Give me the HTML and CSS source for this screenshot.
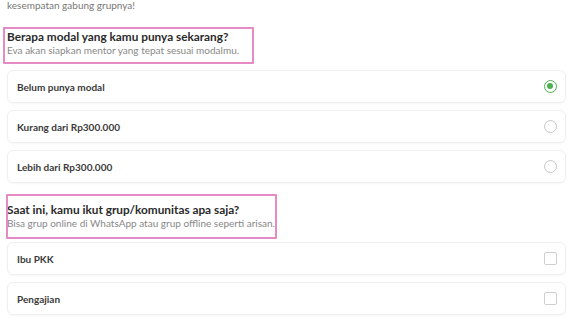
FILE: index.html
```html
<!DOCTYPE html>
<html lang="id">
<head>
    <meta charset="UTF-8">
    <meta name="viewport" content="width=device-width, initial-scale=1.0">
    <title>Kuesioner</title>
    <link rel="stylesheet" href="styles.css">
</head>
<body>
    <p class="intro">kesempatan gabung grupnya!</p>

    <div class="question question-first">
        <h3>Berapa modal yang kamu punya sekarang?</h3>
        <p>Eva akan siapkan mentor yang tepat sesuai modalmu.</p>
        <span class="mark mark-first"></span>
    </div>

    <div class="options">
        <label class="option">
            <span>Belum punya modal</span>
            <span class="radio checked"></span>
        </label>
        <label class="option">
            <span>Kurang dari Rp300.000</span>
            <span class="radio"></span>
        </label>
        <label class="option">
            <span>Lebih dari Rp300.000</span>
            <span class="radio"></span>
        </label>
    </div>

    <div class="question question-second">
        <h3>Saat ini, kamu ikut grup/komunitas apa saja?</h3>
        <p>Bisa grup online di WhatsApp atau grup offline seperti arisan.</p>
        <span class="mark mark-second"></span>
    </div>

    <div class="options">
        <label class="option">
            <span>Ibu PKK</span>
            <span class="check"></span>
        </label>
        <label class="option">
            <span>Pengajian</span>
            <span class="check"></span>
        </label>
    </div>
</body>
</html>
```

FILE: styles.css
```css
body {
    font-family: 'Lato', 'Noto Sans', sans-serif;
    color: #333;
    margin: 0;
    padding: 0 4px 0 7px;
    background-color: #fff;
    overflow: hidden;
}
.intro {
    margin: 0;
    font-size: 10px;
    line-height: 11px;
    color: #777;
}
.question {
    position: relative;
}
.question-first {
    margin-top: 19px;
    margin-bottom: 14px;
}
.question-second {
    margin-top: 20px;
    margin-bottom: 13px;
}
.question h3 {
    margin: 0;
    font-size: 11.8px;
    line-height: 14px;
    font-weight: bold;
    color: #2a2a2a;
}
.question p {
    margin: 0;
    font-size: 10px;
    line-height: 12px;
    color: #888;
}
.mark {
    position: absolute;
    border: 2px solid #e68ac6;
    border-radius: 1px;
}
.mark-first {
    top: -3px;
    left: -4px;
    width: 247px;
    height: 33px;
}
.mark-second {
    top: -9px;
    left: -1px;
    width: 267px;
    height: 41px;
}
.option {
    display: flex;
    justify-content: space-between;
    align-items: center;
    height: 33px;
    box-sizing: border-box;
    padding: 0 8px 0 9px;
    margin-bottom: 7px;
    border: 1px solid #efefef;
    border-radius: 6px;
    box-shadow: 0 1px 2px rgba(0, 0, 0, 0.04);
    font-size: 10px;
    font-weight: bold;
    color: #3a3a3a;
}
.radio {
    width: 13px;
    height: 13px;
    box-sizing: border-box;
    border: 1px solid #c8c8c8;
    border-radius: 50%;
    position: relative;
}
.radio.checked {
    border: 1.5px solid #4caf50;
}
.radio.checked::after {
    content: "";
    position: absolute;
    top: 2px;
    left: 2px;
    width: 6px;
    height: 6px;
    border-radius: 50%;
    background-color: #4caf50;
}
.check {
    width: 13px;
    height: 13px;
    box-sizing: border-box;
    border: 1.5px solid #cfcfcf;
    border-radius: 2px;
}
```
